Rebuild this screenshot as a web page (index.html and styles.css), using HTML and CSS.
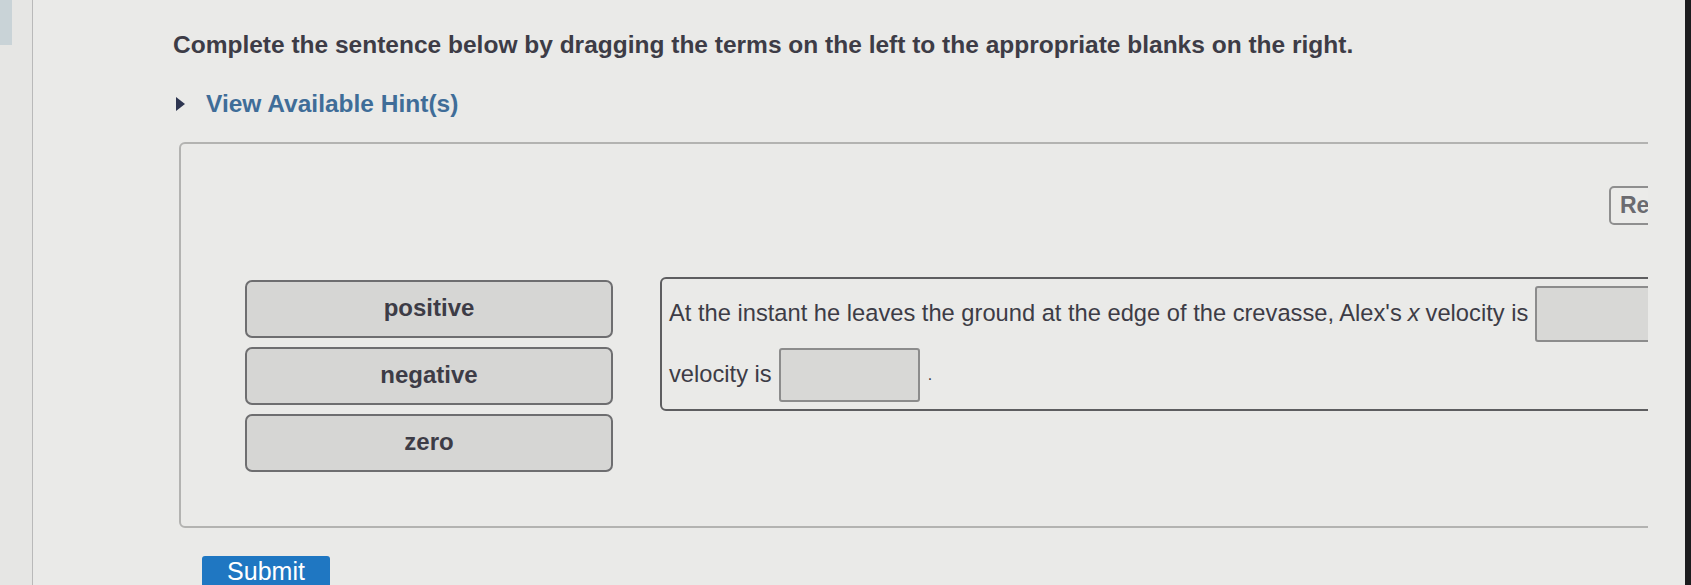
FILE: index.html
```html
<!DOCTYPE html>
<html>
<head>
<meta charset="utf-8">
<link rel="stylesheet" href="styles.css">
</head>
<body>
<div class="screen">
  <aside class="rail"><div class="rail-tab"></div></aside>
  <main class="content">
    <h1 class="prompt">Complete the sentence below by dragging the terms on the left to the appropriate blanks on the right.</h1>
    <div class="hint"><span class="tri"></span><span class="hint-label">View Available Hint(s)</span></div>
    <div class="clip">
      <section class="panel">
        <div class="panel-top"><button class="reset">Re</button></div>
        <div class="dnd">
          <div class="terms">
            <div class="term">positive</div>
            <div class="term">negative</div>
            <div class="term">zero</div>
          </div>
          <div class="sentence">
            <div class="line">At the instant he leaves the ground at the edge of the crevasse, Alex's <i>x</i> velocity is <span class="blank b1"></span></div>
            <div class="line">velocity is <span class="blank b2"></span><span class="dot">.</span></div>
          </div>
        </div>
      </section>
    </div>
    <button class="submit">Submit</button>
  </main>
  <div class="bezel"></div>
</div>
</body>
</html>
```

FILE: styles.css
```css
html, body {
  margin: 0;
  padding: 0;
  background: #eaeae8;
  overflow: hidden;
}
body {
  width: 1691px;
  height: 585px;
  font-family: "Liberation Sans", Arial, sans-serif;
  color: #3d3c46;
}
.screen {
  display: flex;
  height: 585px;
  overflow: hidden;
}
.rail {
  width: 32px;
  flex: none;
  background: #e6e6e4;
  border-right: 1px solid #b9b9b9;
}
.rail-tab {
  width: 12px;
  height: 45px;
  background: #c9d3d7;
}
.content {
  flex: 1;
  min-width: 0;
  padding-left: 140px;
  display: flex;
  flex-direction: column;
}
.content > * {
  flex: none;
}
.prompt {
  margin: 30px 0 0 0;
  font-size: 24.5px;
  font-weight: bold;
  line-height: 30px;
  color: #3d3c46;
  white-space: nowrap;
}
.hint {
  margin-top: 29px;
  display: flex;
  align-items: center;
  height: 30px;
  padding-left: 3px;
}
.tri {
  width: 0;
  height: 0;
  border-top: 7px solid transparent;
  border-bottom: 7px solid transparent;
  border-left: 9px solid #2d3550;
  margin-right: 21px;
}
.hint-label {
  font-size: 24.5px;
  font-weight: bold;
  color: #3f6d98;
}
.clip {
  margin-top: 23px;
  margin-left: 6px;
  width: 1469px;
  overflow: hidden;
}
.panel {
  width: 1600px;
  height: 386px;
  border: 2px solid #b3b3b1;
  border-radius: 6px;
  box-sizing: border-box;
  padding: 42px 0 0 64px;
}
.panel-top {
  display: flex;
  justify-content: flex-end;
  height: 91px;
  padding-right: 68px;
}
.reset {
  font-family: "Liberation Sans", Arial, sans-serif;
  font-size: 23px;
  font-weight: bold;
  color: #6b6b70;
  background: #ebebe9;
  border: 2px solid #8f8f8f;
  border-radius: 5px;
  height: 39px;
  padding: 0 9px;
  text-align: left;
  width: 100px;
}
.dnd {
  display: flex;
  align-items: flex-start;
  gap: 47px;
}
.terms {
  display: flex;
  flex-direction: column;
  gap: 9px;
  width: 368px;
  flex: none;
  padding-top: 3px;
}
.term {
  height: 58px;
  box-sizing: border-box;
  border: 2px solid #6e6e70;
  border-radius: 7px;
  background: #d6d6d4;
  font-size: 24px;
  font-weight: bold;
  color: #3d3c46;
  display: flex;
  justify-content: center;
  padding-top: 12px;
}
.sentence {
  width: 1100px;
  flex: none;
  box-sizing: border-box;
  border: 2px solid #5e5e60;
  border-radius: 6px;
  padding: 6px 0 6px 7px;
  display: flex;
  flex-direction: column;
  gap: 4px;
  font-size: 23.7px;
  color: #3d3c46;
  white-space: nowrap;
}
.line {
  display: flex;
  align-items: center;
  height: 57px;
}
.line i {
  margin: 0 6px;
}
.blank {
  display: inline-block;
  box-sizing: border-box;
  background: #d8d8d6;
  border: 2px solid #8c8c8c;
  border-radius: 3px;
  height: 56px;
  margin-left: 7px;
}
.b1 {
  width: 130px;
}
.b2 {
  width: 141px;
  height: 54px;
}
.dot {
  margin-left: 8px;
  font-size: 16px;
}
.submit {
  margin-top: 28px;
  margin-left: 29px;
  align-self: flex-start;
  width: 128px;
  height: 44px;
  background: #1f77c2;
  color: #ffffff;
  border: none;
  border-radius: 3px 3px 0 0;
  font-family: "Liberation Sans", Arial, sans-serif;
  font-size: 25px;
  line-height: 26px;
  padding: 2px 0 0 0;
  display: flex;
  align-items: flex-start;
  justify-content: center;
}
.bezel {
  width: 6px;
  flex: none;
  background: #1c1c1e;
  margin-left: 30px;
}
```
